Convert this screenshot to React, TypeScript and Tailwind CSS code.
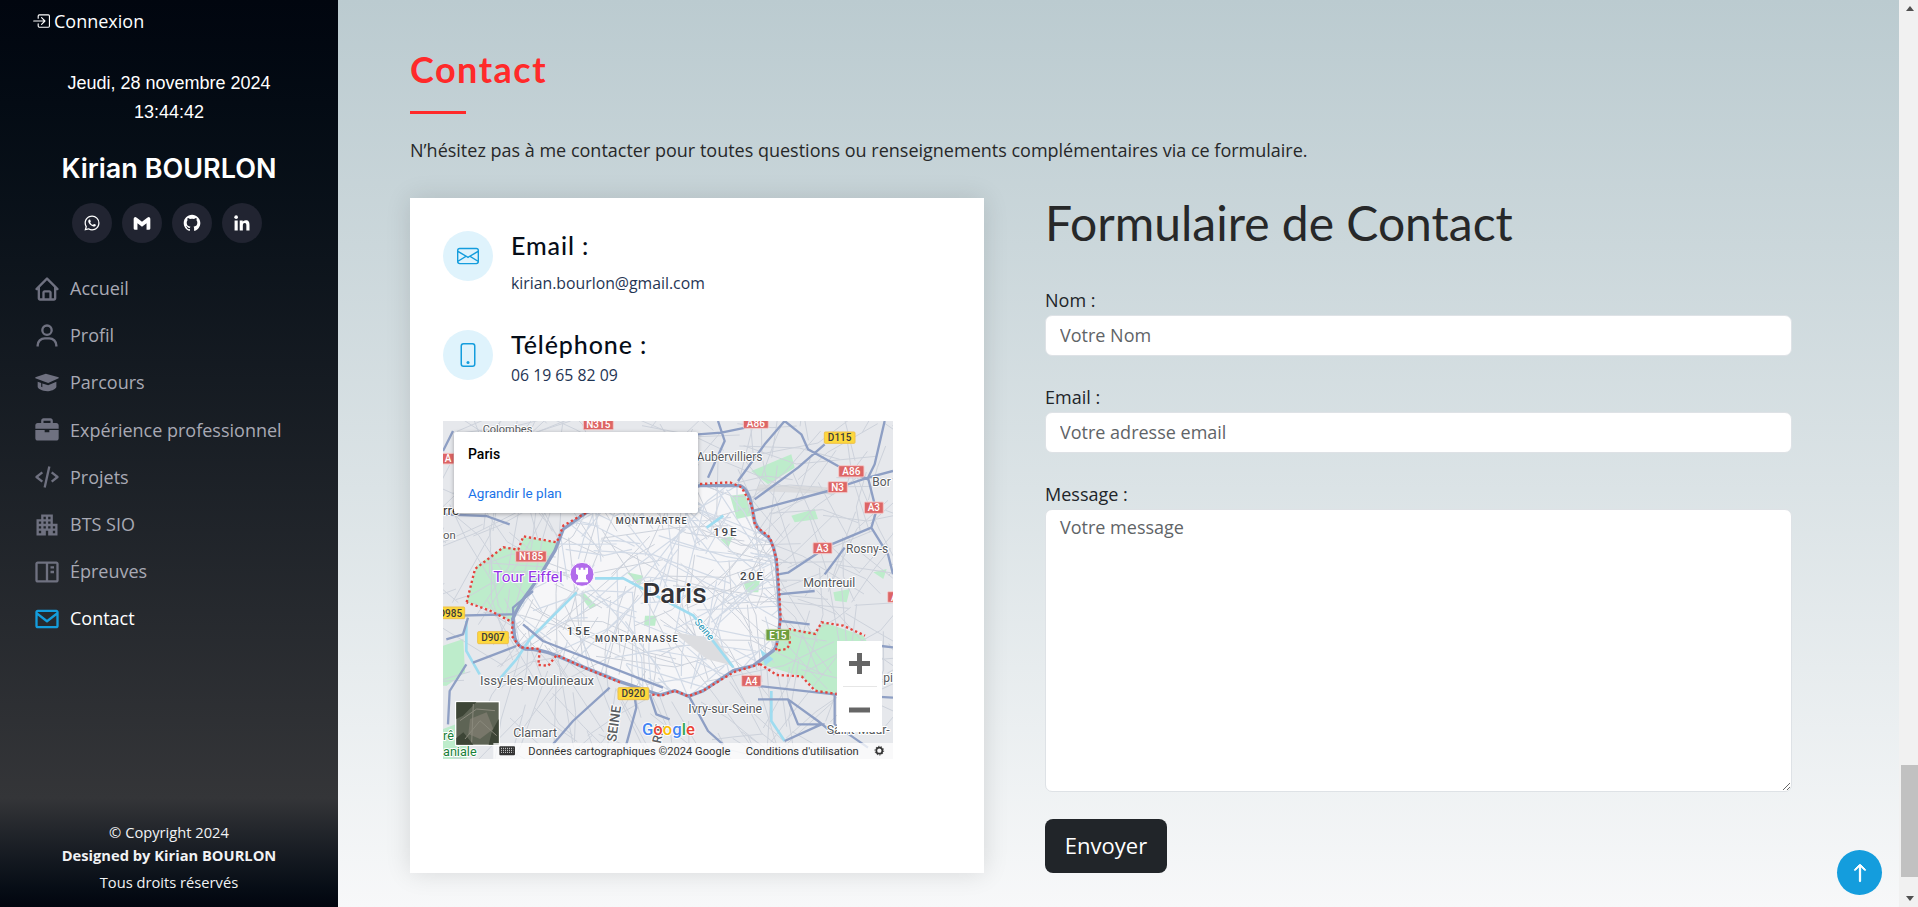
import {
  BiBookContent,
  BiCodeAlt,
  BiEnvelope,
  BiHome,
  BiLogoGithub,
  BiLogoGmail,
  BiLogoLinkedin,
  BiLogoWhatsapp,
  BiSolidBriefcase,
  BiSolidGraduation,
  BiUser,
} from "react-icons/bi";
import { BsArrowUp, BsBoxArrowInRight, BsEnvelope, BsPhone } from "react-icons/bs";
import { MdApartment } from "react-icons/md";

const navItems = [
  { label: "Accueil", icon: BiHome },
  { label: "Profil", icon: BiUser },
  { label: "Parcours", icon: BiSolidGraduation },
  { label: "Expérience professionnel", icon: BiSolidBriefcase },
  { label: "Projets", icon: BiCodeAlt },
  { label: "BTS SIO", icon: MdApartment },
  { label: "Épreuves", icon: BiBookContent },
  { label: "Contact", icon: BiEnvelope, active: true },
];

const socials = [BiLogoWhatsapp, BiLogoGmail, BiLogoGithub, BiLogoLinkedin];

const PARIS_OUTLINE =
  "M370 330 L440 280 L780 200 L900 200 Q925 210 935 260 L945 310 Q955 335 985 355 Q1005 380 1010 440 L1020 600 Q1015 680 1000 695 L940 740 L880 755 L790 815 L745 832 L705 815 L660 828 L540 788 L440 748 L345 708 Q300 690 255 690 Q225 680 222 640 L218 600 Q235 560 265 520 L300 470 L345 395 Z";

const majorRoads = [
  "M1034 6 L1084 46 L1104 91 L1194 141 L1284 181",
  "M774 46 L844 41 L964 16",
  "M1034 6 L974 76 L894 186",
  "M1154 76 L1074 146 L944 241",
  "M939 276 L1164 216 L1284 176 L1359 156",
  "M1334 6 L1304 136 L1284 176 L1309 276 L1294 326 L1174 376 L1044 461 L1014 466",
  "M1294 326 L1344 406 L1359 466",
  "M1214 386 L1154 466",
  "M804 176 L854 66 L834 6",
  "M9 286 L139 291 L209 316",
  "M9 96 L39 36",
  "M9 591 L219 586",
  "M19 661 L69 646 L84 596",
  "M79 736 L29 816 L24 916",
  "M99 731 L229 681",
  "M249 616 L309 666 L669 806",
  "M279 516 L219 566 L224 666",
  "M509 806 L399 906 L339 976",
  "M579 806 L589 866 L559 976",
  "M629 826 L649 886 L689 901",
  "M744 826 L804 936 L849 976",
  "M954 801 L1184 826 L1359 836",
  "M954 841 L1044 841 L1134 906 L1184 946",
  "M1044 841 L1074 916 L1154 916",
  "M1184 826 L1184 916 L1284 986",
  "M1144 916 L1034 966",
  "M1014 526 L1124 516",
  "M1024 606 L1109 616",
  "M1324 681 L1359 685",
];

const parks = [
  "M80 550 L110 440 L190 385 L240 390 L250 355 L350 370 L340 400 L300 470 L250 550 L215 610 L150 570 Z",
  "M1020 640 L1050 630 L1130 640 L1150 610 L1270 650 L1300 700 L1200 830 L1130 815 L1090 775 L960 735 L1005 690 Z",
  "M934 156 L1054 106 L1064 146 L984 196 Z",
  "M870 230 L915 225 L935 290 L890 300 Z",
  "M1054 290 L1124 270 L1134 300 L1064 310 Z",
  "M9 680 L70 660 L75 760 L20 800 L9 800 Z",
  "M560 460 L610 470 L600 500 Z",
  "M910 490 L960 480 L955 520 L920 520 Z",
  "M430 520 L470 560 L450 570 L420 530 Z",
  "M615 590 L650 590 L645 620 L612 620 Z",
  "M840 360 L880 350 L865 385 Z",
  "M1300 460 L1340 450 L1330 480 Z",
  "M1180 520 L1230 510 L1220 550 L1185 545 Z",
  "M9 930 L90 900 L80 1020 L9 1020 Z",
];

// Fine street texture: repeatable pseudo-random polylines, never changes between renders.
function streetLines(seed: number, count: number) {
  let s = seed;
  const next = () => {
    s = (s * 9301 + 49297) % 233280;
    return s / 233280;
  };
  const lines: string[] = [];
  for (let i = 0; i < count; i++) {
    const x = 9 + next() * 1350;
    const y = 6 + next() * 1014;
    const a = next() * Math.PI * 2;
    const len = 70 + next() * 190;
    const bend = (next() - 0.5) * 0.9;
    const x1 = x + Math.cos(a) * len;
    const y1 = y + Math.sin(a) * len;
    const x2 = x1 + Math.cos(a + bend) * len * 0.7;
    const y2 = y1 + Math.sin(a + bend) * len * 0.7;
    lines.push(`M${x.toFixed(0)} ${y.toFixed(0)} L${x1.toFixed(0)} ${y1.toFixed(0)} L${x2.toFixed(0)} ${y2.toFixed(0)}`);
  }
  return lines.join(" ");
}

type BadgeProps = { x: number; y: number; w: number; h: number; label: string; kind?: "red" | "yellow" | "green" };

function Badge({ x, y, w, h, label, kind = "red" }: BadgeProps) {
  const fill = kind === "red" ? "#dd6565" : kind === "yellow" ? "#fdd83c" : "#6f9e3f";
  const stroke = kind === "red" ? "#f3c9c9" : kind === "yellow" ? "#eec04a" : "#c6dcae";
  const color = kind === "yellow" ? "#3c3c3c" : "#ffffff";
  return (
    <g>
      <rect x={x} y={y} width={w} height={h} rx="3" fill={fill} stroke={stroke} strokeWidth="3" />
      <text x={x + w / 2} y={y + h / 2 + 11} fontSize="30" fontWeight="500" textAnchor="middle" fill={color}>
        {label}
      </text>
    </g>
  );
}

type LabelProps = { x: number; y: number; size?: number; fill?: string; weight?: number; spacing?: number; rotate?: number; children: string };

function Label({ x, y, size = 36, fill = "#55585c", weight = 400, spacing = 0, rotate = 0, children }: LabelProps) {
  return (
    <text
      x={x}
      y={y}
      fontSize={size}
      fontWeight={weight}
      letterSpacing={spacing}
      fill={fill}
      stroke="#ffffff"
      strokeWidth="6"
      strokeLinejoin="round"
      paintOrder="stroke"
      transform={rotate ? `rotate(${rotate} ${x} ${y})` : undefined}
    >
      {children}
    </text>
  );
}

function MapDrawing() {
  return (
    <svg viewBox="9 6 1350 1014" className="absolute inset-0 h-full w-full font-['Roboto',sans-serif]">
      <defs>
        <clipPath id="paris">
          <path d={PARIS_OUTLINE} />
        </clipPath>
      </defs>
      <rect x="9" y="6" width="1350" height="1014" fill="#e6e8ec" />
      <path d={PARIS_OUTLINE} fill="#f6f6f8" />
      {parks.map((d) => (
        <path key={d} d={d} fill="#bdeccb" />
      ))}
      <path d={streetLines(7, 300)} fill="none" stroke="#cdd2db" strokeWidth="3" />
      <g clipPath="url(#paris)">
        <path d={streetLines(23, 340)} fill="none" stroke="#d2dae6" strokeWidth="3.5" />
        <path d="M700 640 L800 720 L880 740 L830 660 Z" fill="#dcdde0" />
      </g>
      <path d="M944 216 L1184 226 L1200 206 L960 196 Z" fill="#d4d5d9" opacity="0.7" />
      <path
        d="M880 745 L830 680 L760 590 L610 510 L550 478 L465 478 M410 520 L340 590 L270 660 L230 720 L170 790 M79 606 L79 696 L119 766 M994 816 L994 906 L1034 966 M800 326 L850 290"
        fill="none"
        stroke="#9fdcf0"
        strokeWidth="8"
      />
      <path d="M960 690 L1000 720 L975 740 Z" fill="#9fdcf0" />
      <path d={majorRoads.join(" ")} fill="none" stroke="#8e9fc4" strokeWidth="7" strokeLinejoin="round" />
      <path d={PARIS_OUTLINE} fill="none" stroke="#8e9fc4" strokeWidth="10" strokeLinejoin="round" />
      <path
        d="M80 550 L105 450 L190 385 L235 392 L250 352 L350 370 L370 320 L440 280 M780 195 L870 190 L905 205 L935 260 L945 320 L990 355 L1010 420 L1018 520 L1022 600 L1008 695 L1040 690 L1050 675 L1045 630 L1125 645 L1145 610 L1210 620 L1275 650 M960 735 L1010 768 L1085 772 L1125 815 L1190 825 M960 735 L880 760 L790 815 L745 832 L705 815 L665 830 L630 826 M540 790 L430 745 L350 708 L325 740 L295 738 L298 705 L300 690 L240 685 L215 650 L218 610 L150 575 L80 550"
        fill="none"
        stroke="#e5443c"
        strokeWidth="7"
        strokeDasharray="7 8"
      />

      <Label x={128} y={42} size={33}>Colombes</Label>
      <Label x={770} y={126} size={36}>Aubervilliers</Label>
      <Label x={1297} y={202} size={36}>Bor</Label>
      <Label x={9} y={288} size={40} fill="#333333">rre</Label>
      <Label x={9} y={360} size={34}>on</Label>
      <Label x={527} y={315} size={27} weight={500} spacing={3.2} fill="#45484c">MONTMARTRE</Label>
      <Label x={820} y={351} size={35} weight={500} spacing={5} fill="#45484c">19E</Label>
      <Label x={900} y={483} size={35} weight={500} spacing={5} fill="#45484c">20E</Label>
      <Label x={380} y={648} size={35} weight={500} spacing={5} fill="#45484c">15E</Label>
      <Label x={465} y={668} size={27} weight={500} spacing={3.2} fill="#45484c">MONTPARNASSE</Label>
      <Label x={607} y={552} size={84} weight={500} fill="#333438">Paris</Label>
      <Label x={160} y={488} size={46} fill="#9334e6">Tour Eiffel</Label>
      <Label x={1218} y={402} size={36}>Rosny-s</Label>
      <Label x={1090} y={505} size={37}>Montreuil</Label>
      <Label x={762} y={610} size={30} fill="#1a93b5" rotate={50}>Seine</Label>
      <Label x={120} y={797} size={39}>Issy-les-Moulineaux</Label>
      <Label x={745} y={882} size={37}>Ivry-sur-Seine</Label>
      <Label x={220} y={955} size={37}>Clamart</Label>
      <Label x={1160} y={945} size={37}>Saint-Maur-</Label>
      <Label x={1330} y={790} size={36}>pi</Label>
      <Label x={528} y={970} size={40} weight={500} fill="#5a5d61" rotate={-82}>SEINE</Label>
      <Label x={662} y={975} size={38} weight={500} fill="#5a5d61" rotate={-78}>RIE</Label>
      <Label x={9} y={962} size={38} fill="#188038">rê</Label>
      <Label x={9} y={1010} size={38} fill="#188038">aniale</Label>

      <Badge x={430} y={2} w={90} h={30} label="N315" />
      <Badge x={910} y={-2} w={75} h={30} label="A86" />
      <Badge x={6} y={103} w={36} h={32} label="A" />
      <Badge x={1153} y={39} w={92} h={34} label="D115" kind="yellow" />
      <Badge x={1196} y={140} w={76} h={34} label="A86" />
      <Badge x={1164} y={188} w={58} h={33} label="N3" />
      <Badge x={1273} y={249} w={57} h={34} label="A3" />
      <Badge x={1119} y={371} w={57} h={33} label="A3" />
      <Badge x={227} y={396} w={92} h={33} label="N185" />
      <Badge x={113} y={638} w={92} h={36} label="D907" kind="yellow" />
      <Badge x={-12} y={564} w={86} h={35} label="D985" kind="yellow" />
      <Badge x={534} y={806} w={92} h={36} label="D920" kind="yellow" />
      <Badge x={978} y={631} w={71} h={33} label="E15" kind="green" />
      <Badge x={905} y={769} w={58} h={33} label="A4" />
      <Badge x={1343} y={518} w={40} h={32} label="A" />

      {/* Tour Eiffel pin */}
      <path d="M396 488 L426 517 L456 488 Z" fill="#ffffff" />
      <circle cx="426" cy="466" r="36" fill="#b26ceb" stroke="#ffffff" strokeWidth="3" />
      <path d="M408 446 h8 v6 h6 v-6 h8 v6 h6 v-6 h8 v18 l-6 5 v10 l6 6 v5 h-36 v-5 l6 -6 v-10 l-6 -5 Z" fill="#ffffff" />

      {/* Satellite thumbnail */}
      <rect x="45" y="846" width="135" height="135" rx="3" fill="#ffffff" />
      <rect x="49" y="850" width="127" height="127" fill="#5e6455" />
      <path d="M49 850 h60 l-40 40 l-20 10 Z M176 900 v77 h-30 l10 -40 Z M70 940 l30 37 h-51 v-20 Z" fill="#3d4536" />
      <path d="M90 900 L140 880 L160 930 L120 960 L85 945 Z" fill="#78776a" />
      <path d="M60 905 L110 870 L165 875 M75 960 L120 905 L170 950 M100 855 L95 970" fill="none" stroke="#8a897c" strokeWidth="3" />

      {/* Attribution */}
      <rect x="160" y="972" width="1199" height="48" fill="#ffffff" fillOpacity="0.75" />
      <rect x="178" y="982" width="47" height="27" rx="3" fill="#333333" />
      <path d="M183 988 h37 M183 994 h37 M183 1000 h37" stroke="#ffffff" strokeWidth="2.5" strokeDasharray="3 3" />
      <text x="265" y="1007" fontSize="33.5" fill="#333333">Données cartographiques ©2024 Google</text>
      <text x="917" y="1007" fontSize="33.5" fill="#333333">Conditions d'utilisation</text>
      <circle cx="1318" cy="995" r="9" fill="none" stroke="#333333" strokeWidth="5" />
      <circle cx="1318" cy="995" r="13" fill="none" stroke="#333333" strokeWidth="3" strokeDasharray="4 4" />

      {/* Logo */}
      <text x="606" y="948" fontSize="50" fontWeight="500" stroke="#ffffff" strokeWidth="5" paintOrder="stroke" strokeLinejoin="round">
        <tspan fill="#4285f4">G</tspan>
        <tspan fill="#ea4335">o</tspan>
        <tspan fill="#fbbc05">o</tspan>
        <tspan fill="#4285f4">g</tspan>
        <tspan fill="#34a853">l</tspan>
        <tspan fill="#ea4335">e</tspan>
      </text>
    </svg>
  );
}

function ContactMap() {
  return (
    <div className="relative h-[338px] w-[450px] overflow-hidden">
      <MapDrawing />
      <div className="absolute left-[11px] top-[11px] h-[81px] w-[244px] rounded-[2px] bg-white pl-[14px] pt-[12px] font-['Roboto',sans-serif] shadow-[0_1px_4px_rgba(0,0,0,0.3)]">
        <p className="text-[14px] font-medium leading-[20px] text-black">Paris</p>
        <p className="mt-[20px] text-[13.5px] leading-[18px] text-[#1a73e8]">Agrandir le plan</p>
      </div>
      <div className="absolute left-[394px] top-[220px] flex h-[91px] w-[45px] flex-col items-center bg-white">
        <svg viewBox="0 0 45 45" className="h-[45px] w-[45px] shrink-0">
          <path d="M12 22.5 H33 M22.5 12 V33" stroke="#666666" strokeWidth="5" />
        </svg>
        <div className="h-px w-[34px] bg-[#e6e6e6]" />
        <svg viewBox="0 0 45 45" className="h-[45px] w-[45px] shrink-0">
          <path d="M12 23 H33" stroke="#666666" strokeWidth="5" />
        </svg>
      </div>
    </div>
  );
}

function Sidebar() {
  return (
    <aside className="flex h-full w-[338px] shrink-0 flex-col bg-linear-to-b from-[#01060f] via-[#343538] via-[88%] to-[#02060f] font-['Open_Sans',sans-serif]">
      <div className="mt-[7px] flex h-[28px] items-center pl-[32px] text-[18px] text-white">
        <BsBoxArrowInRight className="h-[18px] w-[18px]" />
        <span className="ml-[4px]">Connexion</span>
      </div>
      <div className="mt-[34px] text-center font-['Liberation_Sans',sans-serif] text-[18px] leading-[29px] text-white">
        <p>Jeudi, 28 novembre 2024</p>
        <p>13:44:42</p>
      </div>
      <h1 className="mt-[24px] text-center font-['Inter',sans-serif] text-[27px] font-semibold leading-[36px] text-white">
        Kirian BOURLON
      </h1>
      <div className="mt-[16px] flex justify-center gap-[10px] pr-[5px]">
        {socials.map((Icon, i) => (
          <span key={i} className="flex h-[40px] w-[40px] items-center justify-center rounded-full bg-[#212431] text-white">
            <Icon className="h-[20px] w-[20px]" />
          </span>
        ))}
      </div>
      <nav className="mt-[22px] pl-[33px]">
        {navItems.map(({ label, icon: Icon, active }) => (
          <a key={label} className={`flex h-[47.2px] items-center text-[18px] ${active ? "text-white" : "text-[#a8a9b4]"}`}>
            <Icon className={`h-[28px] w-[28px] ${active ? "text-[#149ddd]" : "text-[#6f7180]"}`} />
            <span className="ml-[9px]">{label}</span>
          </a>
        ))}
      </nav>
      <footer className="mt-auto pb-[12px] text-center text-[14.7px] text-[#f1f2f4]">
        <p className="leading-[22px]">© Copyright 2024</p>
        <p className="font-bold leading-[24px]">Designed by Kirian BOURLON</p>
        <p className="mt-[2px] leading-[26px]">Tous droits réservés</p>
      </footer>
    </aside>
  );
}

function InfoRow({ icon, title, value, valueClass }: { icon: React.ReactNode; title: string; value: string; valueClass: string }) {
  return (
    <div className="flex gap-[18px]">
      <span className="flex h-[50px] w-[50px] shrink-0 items-center justify-center rounded-full bg-[#dff3fc] text-[#149ddd]">{icon}</span>
      <div>
        <h4 className="font-['Lato',sans-serif] text-[25px] font-medium leading-[28px] tracking-[0.9px] text-[#050d18]">{title}</h4>
        <p className={`text-[15.8px] leading-[24px] text-[#1f3554] ${valueClass}`}>{value}</p>
      </div>
    </div>
  );
}

function Field({ label, placeholder, className }: { label: string; placeholder: string; className: string }) {
  return (
    <label className="block">
      <span className="block text-[18px] leading-[24px] text-[#212529]">{label}</span>
      {className.includes("resize") ? (
        <textarea placeholder={placeholder} className={`mt-[3px] block w-full rounded-[7px] border border-[#dee2e6] bg-white px-[14px] py-[4px] text-[18px] placeholder:text-[#5f6467] ${className}`} />
      ) : (
        <input placeholder={placeholder} className={`mt-[3px] block w-full rounded-[7px] border border-[#dee2e6] bg-white px-[14px] pb-[2px] text-[18px] placeholder:text-[#5f6467] ${className}`} />
      )}
    </label>
  );
}

export default function App() {
  return (
    <div className="relative flex h-screen w-full overflow-hidden font-['Open_Sans',sans-serif]">
      <Sidebar />
      <main className="h-full min-w-0 flex-1 bg-linear-to-b from-[#bbcbd0] to-[#f7f8f9] pl-[72px] pt-[47px]">
        <h2 className="font-['Lato',sans-serif] text-[36px] font-bold leading-[44px] tracking-[1.5px] text-[#ff2a2a]">Contact</h2>
        <div className="mt-[20px] h-[3px] w-[56px] bg-[#ff2a2a]" />
        <p className="mt-[23px] text-[18px] leading-[27px] text-[#272829]">
          N’hésitez pas à me contacter pour toutes questions ou renseignements complémentaires via ce formulaire.
        </p>
        <div className="mt-[34px] flex items-start gap-[61px]">
          <section className="h-[675px] w-[574px] shrink-0 bg-white pl-[33px] pt-[33px] shadow-[0_0_24px_rgba(0,0,0,0.12)]">
            <InfoRow icon={<BsEnvelope className="h-[22px] w-[22px]" />} title="Email :" value="kirian.bourlon@gmail.com" valueClass="mt-[12px]" />
            <div className="mt-[35px]">
              <InfoRow icon={<BsPhone className="h-[24px] w-[24px]" />} title="Téléphone :" value="06 19 65 82 09" valueClass="mt-[5px]" />
            </div>
            <div className="mt-[34px]">
              <ContactMap />
            </div>
          </section>
          <section className="w-[747px]">
            <h3 className="font-['Lato',sans-serif] text-[48px] font-normal leading-[50px] text-[#272829]">Formulaire de Contact</h3>
            <form className="mt-[40px]">
              <Field label="Nom :" placeholder="Votre Nom" className="h-[41px]" />
              <div className="mt-[29px]">
                <Field label="Email :" placeholder="Votre adresse email" className="h-[41px]" />
              </div>
              <div className="mt-[29px]">
                <Field label="Message :" placeholder="Votre message" className="h-[283px] resize-y" />
              </div>
              <button type="button" className="mt-[27px] h-[54px] w-[122px] rounded-[8px] bg-[#212529] pb-[2px] text-[22px] text-white">
                Envoyer
              </button>
            </form>
          </section>
        </div>
      </main>
      <div className="flex h-full w-[19px] shrink-0 flex-col bg-[#f1f1f1]">
        <div className="flex h-[17px] items-center justify-center pl-[2px]">
          <span className="h-0 w-0 border-x-[4px] border-b-[5px] border-x-transparent border-b-[#505050]" />
        </div>
        <div className="mt-[748px] ml-[2px] h-[112px] bg-[#c1c1c1]" />
        <div className="mt-auto flex h-[17px] items-center justify-center pl-[2px]">
          <span className="h-0 w-0 border-x-[4px] border-t-[5px] border-x-transparent border-t-[#505050]" />
        </div>
      </div>
      <button type="button" className="absolute bottom-[12px] right-[36px] flex h-[45px] w-[45px] items-center justify-center rounded-full bg-[#149ddd] text-white">
        <BsArrowUp className="h-[20px] w-[20px]" strokeWidth={0.8} />
      </button>
    </div>
  );
}
